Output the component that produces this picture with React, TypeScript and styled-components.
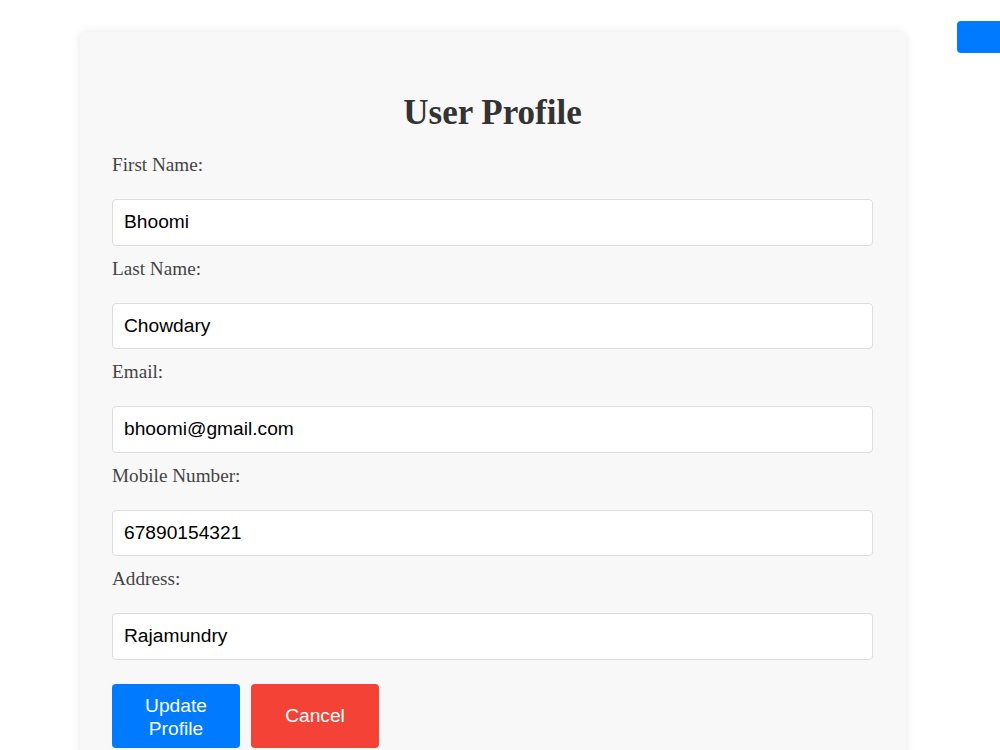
import React from "react";
import styled, { createGlobalStyle } from "styled-components";

const Global = createGlobalStyle`
  html, body { margin: 0; padding: 0; background: #ffffff; overflow: hidden; }
  body { font-family: "Liberation Serif", "Times New Roman", serif; }
  * { box-sizing: border-box; }
`;

const Page = styled.div`
  position: relative;
  padding: 32px 0 0 80px;
  min-height: 750px;
  overflow: hidden;
`;

const Card = styled.div`
  width: 826px;
  background: #f8f8f8;
  border-radius: 8px;
  box-shadow: 0 0 10px rgba(0, 0, 0, 0.1);
  padding: 61px 33px 40px 32px;
`;

const Title = styled.h1`
  margin: 0 0 21px;
  text-align: center;
  font-family: "Liberation Serif", "Times New Roman", serif;
  font-size: 35px;
  font-weight: bold;
  color: #333333;
  line-height: 40px;
`;

const Field = styled.div`
  display: flex;
  flex-direction: column;
  margin-bottom: 12px;
`;

const Label = styled.label`
  display: block;
  font-family: "Liberation Serif", "Times New Roman", serif;
  font-size: 19.2px;
  line-height: 22px;
  color: #444444;
  margin-bottom: 23px;
`;

const Input = styled.input`
  width: 100%;
  height: 46.5px;
  padding: 0 11px;
  font-family: "Liberation Sans", Arial, sans-serif;
  font-size: 19.2px;
  color: #000000;
  background: #ffffff;
  border: 1px solid #dddddd;
  border-radius: 4px;
  outline: none;
`;

const Actions = styled.div`
  display: flex;
  gap: 11px;
  margin-top: 24px;
`;

const Button = styled.button<{ $variant: "primary" | "danger" }>`
  width: 128px;
  height: 64px;
  padding: 10px 20px;
  border: none;
  border-radius: 4px;
  font-family: "Liberation Sans", Arial, sans-serif;
  font-size: 19.2px;
  line-height: 23px;
  color: #ffffff;
  cursor: pointer;
  background: ${(p) => (p.$variant === "primary" ? "#007bff" : "#f44336")};
`;

const CornerButton = styled.button`
  position: absolute;
  top: 21px;
  left: 957px;
  width: 60px;
  height: 32px;
  border: none;
  border-radius: 4px;
  background: #007bff;
  padding: 0;
`;

const fields = [
  { label: "First Name:", value: "Bhoomi" },
  { label: "Last Name:", value: "Chowdary" },
  { label: "Email:", value: "bhoomi@gmail.com" },
  { label: "Mobile Number:", value: "67890154321" },
  { label: "Address:", value: "Rajamundry" },
];

export default function App() {
  return (
    <>
      <Global />
      <Page>
        <CornerButton aria-label="Logout" />
        <Card>
          <Title>User Profile</Title>
          {fields.map((f) => (
            <Field key={f.label}>
              <Label>{f.label}</Label>
              <Input defaultValue={f.value} />
            </Field>
          ))}
          <Actions>
            <Button $variant="primary">Update Profile</Button>
            <Button $variant="danger">Cancel</Button>
          </Actions>
        </Card>
      </Page>
    </>
  );
}
